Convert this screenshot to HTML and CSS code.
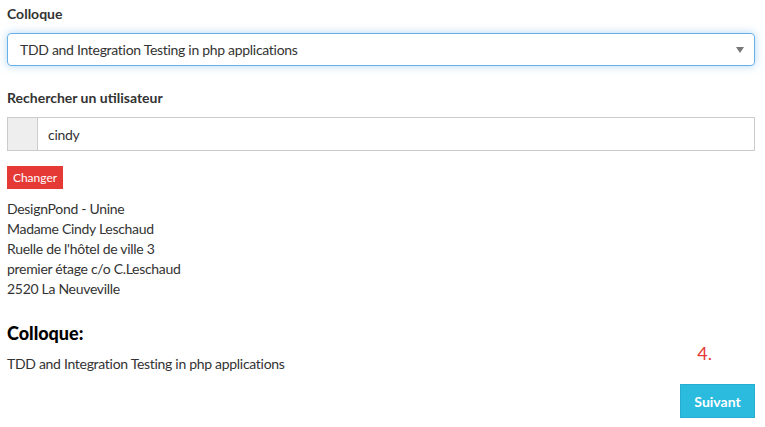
FILE: index.html
```html
<!DOCTYPE html>
<html lang="fr">
<head>
<meta charset="utf-8">
<title>Inscription</title>
<link rel="stylesheet" href="styles.css">
</head>
<body>
<div class="page">
  <div class="field">
    <label class="label">Colloque</label>
    <div class="select">
      <span>TDD and Integration Testing in php applications</span>
      <span class="caret"></span>
    </div>
  </div>
  <div class="field second">
    <label class="label">Rechercher un utilisateur</label>
    <div class="input-group">
      <span class="addon"></span>
      <span class="input">cindy</span>
    </div>
  </div>
  <button class="btn-change">Changer</button>
  <div class="address">
    <div>DesignPond - Unine</div>
    <div>Madame Cindy Leschaud</div>
    <div>Ruelle de l'hôtel de ville 3</div>
    <div>premier étage c/o C.Leschaud</div>
    <div>2520 La Neuveville</div>
  </div>
  <h3 class="title">Colloque:</h3>
  <div class="bottom">
    <p class="colloque">TDD and Integration Testing in php applications</p>
    <div class="actions">
      <span class="step">4.</span>
      <button class="btn-next">Suivant</button>
    </div>
  </div>
</div>
</body>
</html>
```
FILE: styles.css
```css
html, body {
  margin: 0;
  padding: 0;
  background: #fff;
}
body {
  font-family: "Lato", "Liberation Sans", sans-serif;
  font-size: 14px;
  color: #333;
  letter-spacing: -0.3px;
}
.page {
  padding: 4px 10px 0 7px;
}
.label {
  display: block;
  font-weight: bold;
  font-size: 14px;
  line-height: 20px;
  margin-bottom: 9px;
  letter-spacing: 0;
}
.select {
  height: 33px;
  box-sizing: border-box;
  border: 1px solid #66afe9;
  border-radius: 4px;
  box-shadow: 0 0 8px rgba(102, 175, 233, 0.5);
  display: flex;
  align-items: center;
  justify-content: space-between;
  padding: 0 10px 0 12px;
}
.caret {
  width: 0;
  height: 0;
  border-left: 4px solid transparent;
  border-right: 4px solid transparent;
  border-top: 6px solid #777;
}
.second {
  margin-top: 22px;
}
.input-group {
  display: flex;
  height: 34px;
  box-sizing: border-box;
  border: 1px solid #ccc;
}
.addon {
  width: 29px;
  background: #eee;
  border-right: 1px solid #ccc;
}
.input {
  display: flex;
  align-items: center;
  padding-left: 10px;
}
.btn-change {
  margin-top: 15px;
  display: block;
  background: #e53935;
  color: #fff;
  border: 0;
  font-family: inherit;
  font-size: 12px;
  height: 23px;
  width: 56px;
  padding: 0;
  letter-spacing: 0;
}
.address {
  margin-top: 10px;
  line-height: 20px;
}
.title {
  margin: 22px 0 0;
  font-size: 18px;
  font-weight: 900;
  color: #000;
  line-height: 24px;
  letter-spacing: 0;
}
.bottom {
  display: flex;
  justify-content: space-between;
  align-items: flex-start;
}
.colloque {
  margin: 9px 0 0;
  line-height: 20px;
}
.actions {
  display: flex;
  flex-direction: column;
  align-items: flex-end;
}
.step {
  color: #e53935;
  font-size: 18px;
  line-height: 24px;
  margin-right: 43px;
  margin-top: -4px;
  letter-spacing: 0;
}
.btn-next {
  margin-top: 19px;
  background: #2bbbde;
  color: #fff;
  border: 1px solid #26aed0;
  font-family: inherit;
  font-weight: bold;
  font-size: 14px;
  letter-spacing: 0;
  width: 75px;
  height: 34px;
  padding: 0;
}
```
